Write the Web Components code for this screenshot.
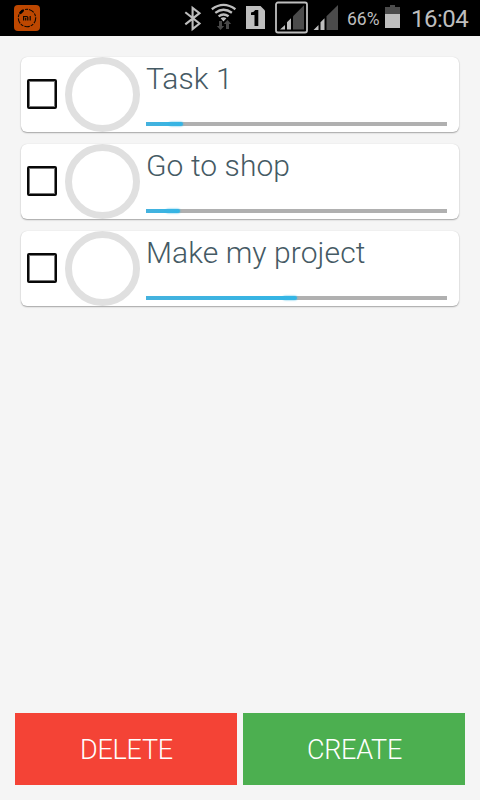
<!DOCTYPE html>
<html lang="en">
<head>
<meta charset="utf-8">
<title>Tasks</title>
<style>
html,body{margin:0;height:100%;background:#f5f5f5;font-family:Roboto,"Noto Sans",sans-serif}
</style>
</head>
<body>
<task-app></task-app>
<script>
function define(name, html, setup) {
  const tpl = document.createElement('template');
  tpl.innerHTML = html;
  customElements.define(name, class extends HTMLElement {
    connectedCallback() {
      if (this.shadowRoot) return;
      this.attachShadow({mode: 'open'}).append(tpl.content.cloneNode(true));
      if (setup) setup(this);
    }
  });
}

define('status-bar', `
<style>
:host{display:flex;height:36px;background:#000;color:#bebebe;white-space:nowrap;overflow:hidden}
svg{display:block;flex:none}
.app{margin-left:14px}
.grow{flex:1}
.pct{width:38px;font-size:17.5px;line-height:38px;letter-spacing:0}
.time{width:69px;font-size:24px;line-height:38px;letter-spacing:-.5px}
</style>
<svg class="app" width="26" height="36" viewBox="14 0 26 36">
  <rect x="14" y="5" width="26" height="26" rx="4" fill="#bd4700"/>
  <circle cx="27" cy="18" r="8.7" fill="none" stroke="#100800" stroke-width="1.1" stroke-dasharray="5.5 1.2 3 1"/>
  <path d="M20.500 12.800l2-2" stroke="#000" stroke-width="2.600" stroke-linecap="round"/>
  <path d="M23.6 20.5v-4h3.2q1 0 1 1v3M25.7 17.8v2.7M30.2 16v4.5" fill="none" stroke="#100800" stroke-width="1.2"/>
</svg>
<span class="grow"></span>
<svg width="170" height="36" viewBox="177 0 170 36">
  <path d="M185.3 12.3L199.500 23.5L192.6 29V7.8L199.500 13.2L185.3 24.3" fill="none" stroke="#bebebe" stroke-width="2.1"/>
  <g fill="none" stroke="#bebebe" stroke-width="2.3">
    <path d="M211.8 9.2Q223.5 .6 235.4 9.2"/>
    <path d="M215.3 12.8Q223.5 6.7 231.9 12.8"/>
    <path d="M218.6 16.3Q223.5 12.6 228.6 16.3"/>
  </g>
  <path d="M220.6 18.2q2.9-2 5.8 0l-2.9 3.2z" fill="#bebebe"/>
  <path d="M219 21h3v5h2.2L220.5 30l-3.7-4h2.2zM226 29h3v-5h2.2L227.500 20l-3.700 4h2.200z" fill="#484848"/>
  <path d="M246 6h14.500l4.500 4.500v18.500h-19z" fill="#bebebe"/>
  <path d="M258.300 10v16h-3.800V15h-3.500v-2.600q3.200-.2 4.200-2.400z" fill="#000"/>
  <rect x="276" y="2.500" width="31" height="30" rx="2" fill="none" stroke="#bebebe" stroke-width="1.800"/>
  <path d="M280 29.500l5-4.500v4.500zM287 29.500v-7.300l4-4v11.300z" fill="#bebebe"/>
  <path d="M293 29.500V16.200L304 5.200v24.300z" fill="#4b4b4b"/>
  <path d="M313.500 30l5-5v5zM320.500 30v-7.700l4-4V30z" fill="#bebebe"/>
  <path d="M326.500 30V16.200L338 5v25z" fill="#4b4b4b"/>
</svg>
<span class="pct">66%</span>
<svg width="26" height="36" viewBox="385 0 26 36">
  <path d="M385 7h5V5h5v2h5v7h-15z" fill="#4b4b4b"/><path d="M385 14h15v14h-15z" fill="#bebebe"/>
</svg>
<span class="time">16:04</span>`);

define('check-box', `
<style>
:host{display:block;box-sizing:border-box;width:30px;height:30px;border:2px solid #080808;border-radius:2px;box-shadow:inset 0 0 0 1px #777}
</style>`);

define('progress-line', `
<style>
:host{display:block;height:4px;background:#b0b0b0}
i{display:block;width:var(--value);height:4px;border-radius:0 2px 2px 0;background:linear-gradient(90deg,#45b2de,#33b5e5)}
i::after{content:"";display:block;width:14px;height:4px;margin-left:auto;border-radius:2px;box-shadow:0 0 2px #33b5e5}
</style><i></i>`);

define('task-card', `
<style>
:host{display:flex;align-items:center;box-sizing:border-box;height:75px;padding:0 12px 0 6px;background:#fff;border-radius:6px;box-shadow:0 1px 1.500px rgba(0,0,0,.32),0 0 1px rgba(0,0,0,.14)}
.ring{box-sizing:border-box;width:75px;height:75px;border:7.500px solid #e0e0e0;border-radius:50%;margin:0 6px 0 8px;flex:none}
check-box{flex:none;margin-bottom:2px}
.body{flex:1;height:75px;display:flex;flex-direction:column}
.title{height:65px;box-sizing:border-box;padding-top:4px;font-size:30px;font-weight:300;line-height:35px;letter-spacing:.08px;color:#455a64;white-space:nowrap}
</style>
<check-box></check-box><div class="ring"></div>
<div class="body"><div class="title"><slot></slot></div><progress-line></progress-line></div>`,
el => el.style.setProperty('--value', el.getAttribute('progress') + 'px'));

define('flat-button', `
<style>
:host{display:flex;align-items:center;justify-content:center;box-sizing:border-box;flex:1;height:72px;padding:2px 0 0 1px;font-size:27px;font-weight:300;line-height:32px;letter-spacing:-.25px;color:#fff;background:var(--fill)}
</style><span><slot></slot></span>`);

define('task-app', `
<style>
:host{display:flex;flex-direction:column;height:100vh;background:#f5f5f5}
main{flex:1;display:flex;flex-direction:column;gap:12px;padding:21px 21px 0}
footer{display:flex;gap:6px;padding:0 15px 15px}
</style>
<status-bar></status-bar>
<main>
  <task-card progress="37">Task 1</task-card>
  <task-card progress="34">Go to shop</task-card>
  <task-card progress="151">Make my project</task-card>
</main>
<footer>
  <flat-button style="--fill:#f44336">DELETE</flat-button>
  <flat-button style="--fill:#4caf50">CREATE</flat-button>
</footer>`);
</script>
</body>
</html>
